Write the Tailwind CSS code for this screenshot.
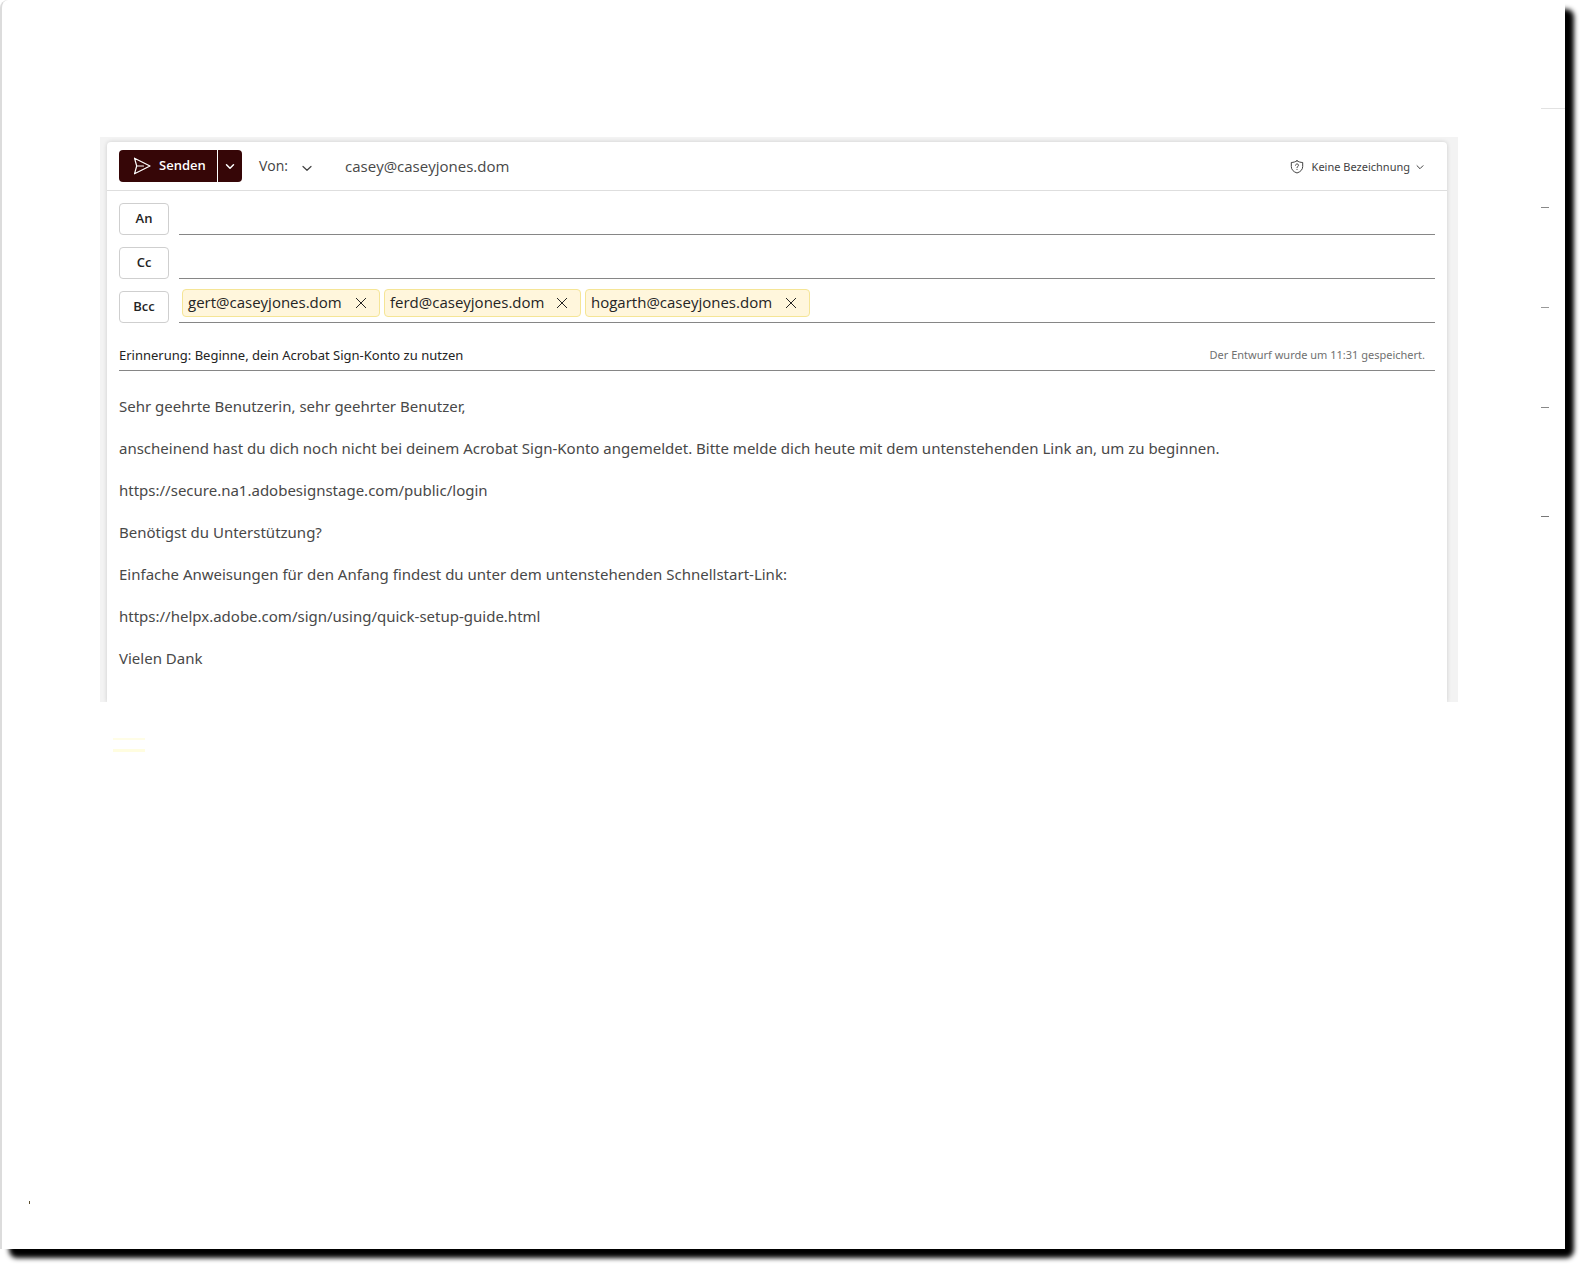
<!DOCTYPE html>
<html lang="de">
<head>
<meta charset="utf-8">
<title>Neue Nachricht</title>
<script src="https://cdn.jsdelivr.net/npm/@tailwindcss/browser@4"></script>
</head>
<body class="flex min-h-screen bg-white pr-[15px] pb-4 font-['Open_Sans',sans-serif] text-[#242424]">
<div class="flex flex-1 rounded-lg shadow-[9px_9px_5px_#000]">
<main class="flex min-w-0 flex-1 flex-col rounded-tl-lg border-l-2 border-[#dcdcdc] bg-white">
  <div class="flex h-[109px] items-end justify-end"><div class="h-px w-6 bg-[#e2e2e2]"></div></div>
  <div class="flex">
    <section class="mt-7 ml-[98px] h-[565px] min-w-0 flex-1 overflow-hidden bg-[#f3f3f3] pt-[5px] pr-[11px] pl-[7px]">
      <form class="h-full rounded-t-sm bg-white shadow-[0_0_4px_#00000029]">
        <header class="flex h-[49px] items-center border-b border-[#dedede] px-3">
          <div class="flex h-8 shrink-0 overflow-hidden rounded bg-[#360607] text-white">
            <button type="button" class="flex w-[98px] items-center gap-2 pl-[14px] text-[13px] font-semibold">
              <svg class="size-[18px] shrink-0" viewBox="0 0 18 18" fill="none" stroke="currentColor" stroke-width="1.2" stroke-linejoin="round" stroke-linecap="round"><path d="M1.5 1.2 17 9 1.5 16.8 3.7 9ZM3.7 9H10.5"/></svg>Senden</button>
            <button type="button" aria-label="Weitere Sendeoptionen" class="flex w-[25px] items-center justify-center border-l border-white"><svg class="size-3" viewBox="0 0 12 12" fill="none" stroke="currentColor" stroke-width="1.5" stroke-linecap="round" stroke-linejoin="round"><path d="m2.5 4.7 3.5 3.5 3.5-3.5"/></svg></button>
          </div>
          <button type="button" class="ml-[17px] flex items-center gap-[13px] text-sm font-medium text-[#424242]">Von:<svg class="mt-1 size-3" viewBox="0 0 12 12" fill="none" stroke="currentColor" stroke-width="1.2" stroke-linecap="round" stroke-linejoin="round"><path d="M2 4.5 6 8.3l4-3.8"/></svg></button>
          <span class="ml-8 text-[15px] text-[#484848]">casey@caseyjones.dom</span>
          <button type="button" class="mt-[2px] mr-[10px] ml-auto flex items-center font-['Noto_Sans',sans-serif] text-[11px] text-[#424242]"><svg class="mr-2 size-[14px]" viewBox="0 0 14 14" fill="none" stroke="currentColor" stroke-width="1" stroke-linecap="round" stroke-linejoin="round"><path d="M7 .8C5.500 1.900 3.500 2.400 1.300 2.500v4C1.300 9.700 3.500 11.800 7 13c3.500-1.200 5.700-3.300 5.700-6.500v-4C10.500 2.400 8.500 1.900 7 .8Z"/><path d="M5.500 5.200C5.600 3.500 8.500 3.500 8.500 5.200 8.500 6.400 7 6.400 7 7.700M7 9.400v.1"/></svg>Keine Bezeichnung<svg class="ml-[5px] size-[10px]" viewBox="0 0 10 10" fill="none" stroke="currentColor" stroke-width="1" stroke-linecap="round" stroke-linejoin="round"><path d="m2 3.700 3 3 3-3"/></svg></button>
        </header>
        <div class="flex flex-col gap-3 px-3 pt-3">
          <div class="flex gap-[10px]"><button type="button" class="h-8 w-[50px] rounded border border-[#cfcfcf] text-[13px] font-semibold">An</button><input aria-label="An" class="h-8 min-w-0 flex-1 border-b border-[#868686] outline-none"></div>
          <div class="flex gap-[10px]"><button type="button" class="h-8 w-[50px] rounded border border-[#cfcfcf] text-[13px] font-semibold">Cc</button><input aria-label="Cc" class="h-8 min-w-0 flex-1 border-b border-[#868686] outline-none"></div>
          <div class="flex gap-[10px]"><button type="button" class="h-8 w-[50px] rounded border border-[#cfcfcf] text-[13px] font-semibold">Bcc</button>
            <div class="-mt-1 flex h-9 min-w-0 flex-1 items-start gap-1 border-b border-[#868686] pt-[2px] pl-[3px] text-[15px] leading-6">
              <span class="flex h-7 w-[198px] items-start justify-between rounded border border-[#f5e596] bg-[#fff6dc] pr-3 pl-[5px]">gert@caseyjones.dom<button type="button" aria-label="gert entfernen" class="flex h-[26px] items-center"><svg class="size-3" viewBox="0 0 12 12" stroke="currentColor"><path d="m1 1 10 10M11 1 1 11"/></svg></button></span>
              <span class="flex h-7 w-[197px] items-start justify-between rounded border border-[#f5e596] bg-[#fff6dc] pr-3 pl-[5px]">ferd@caseyjones.dom<button type="button" aria-label="ferd entfernen" class="flex h-[26px] items-center"><svg class="size-3" viewBox="0 0 12 12" stroke="currentColor"><path d="m1 1 10 10M11 1 1 11"/></svg></button></span>
              <span class="flex h-7 w-[225px] items-start justify-between rounded border border-[#f5e596] bg-[#fff6dc] pr-3 pl-[5px]">hogarth@caseyjones.dom<button type="button" aria-label="hogarth entfernen" class="flex h-[26px] items-center"><svg class="size-3" viewBox="0 0 12 12" stroke="currentColor"><path d="m1 1 10 10M11 1 1 11"/></svg></button></span>
              <input aria-label="Bcc" class="h-7 min-w-0 flex-1 outline-none">
            </div>
          </div>
        </div>
        <div class="mx-3 mt-4 flex h-8 items-center border-b border-[#868686] pt-[2px] font-['Noto_Sans',sans-serif]">
          <input aria-label="Betreff" value="Erinnerung: Beginne, dein Acrobat Sign-Konto zu nutzen" class="min-w-0 flex-1 text-[13px] outline-none">
          <span class="mr-[10px] text-[11px] text-[#707070]">Der Entwurf wurde um 11:31 gespeichert.</span>
        </div>
        <div class="flex flex-col gap-[18px] px-3 pt-[23px] font-['Noto_Sans',sans-serif] text-[15px] leading-6 text-[#484848]">
          <p>Sehr geehrte Benutzerin, sehr geehrter Benutzer,</p>
          <p>anscheinend hast du dich noch nicht bei deinem Acrobat Sign-Konto angemeldet. Bitte melde dich heute mit dem untenstehenden Link an, um zu beginnen.</p>
          <p><a href="https://secure.na1.adobesignstage.com/public/login">https://secure.na1.adobesignstage.com/public/login</a></p>
          <p>Benötigst du Unterstützung?</p>
          <p>Einfache Anweisungen für den Anfang findest du unter dem untenstehenden Schnellstart-Link:</p>
          <p><a href="https://helpx.adobe.com/sign/using/quick-setup-guide.html">https://helpx.adobe.com/sign/using/quick-setup-guide.html</a></p>
          <p>Vielen Dank</p>
        </div>
      </form>
    </section>
    <aside class="flex w-[107px] shrink-0 flex-col items-end gap-[99px] pt-[98px] pr-4">
      <div class="h-px w-2 bg-[#888]"></div>
      <div class="h-px w-2 bg-[#999]"></div>
      <div class="h-px w-2 bg-[#888]"></div>
      <div class="mt-[9px] h-px w-2 bg-[#777]"></div>
    </aside>
  </div>
  <div class="mt-9 ml-[111px] flex w-8 flex-col gap-[9px]"><div class="h-[2px] bg-[#fffde6]"></div><div class="h-[3px] bg-[#fffde0]"></div></div>
  <div class="mt-auto mb-[45px] ml-[27px] h-[3px] w-px bg-[#5c5030]"></div>
</main>
</div>
</body>
</html>
